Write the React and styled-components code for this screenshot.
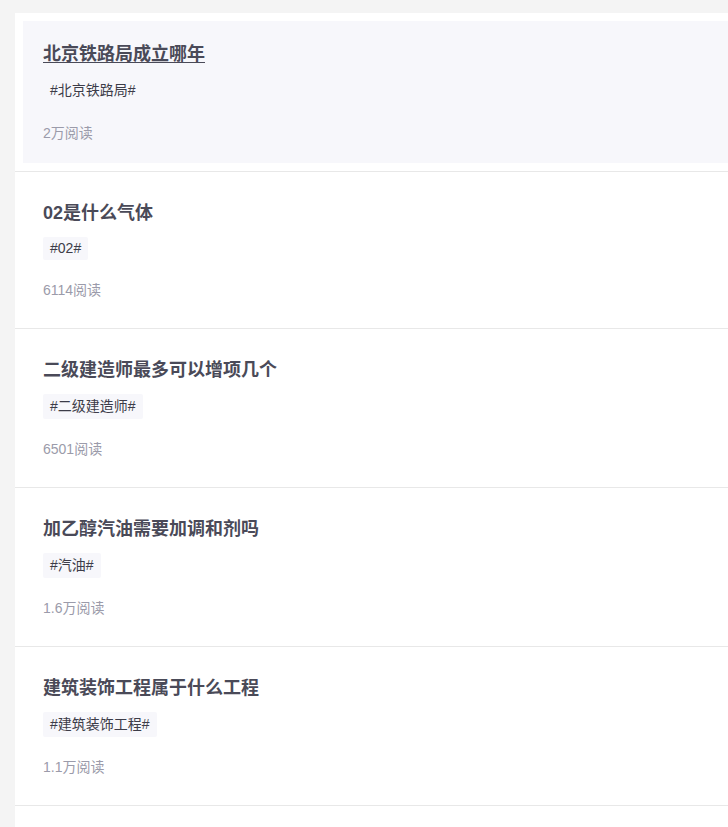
import React from "react";
import styled, { createGlobalStyle } from "styled-components";

const GlobalStyle = createGlobalStyle`
  html, body {
    margin: 0;
    padding: 0;
    background: #f4f4f4;
    overflow: hidden;
  }
  body {
    font-family: "Liberation Sans", "Noto Sans CJK SC", sans-serif;
  }
`

const Page = styled.div`
  padding: 13px 0 0 15px;
  height: 827px;
  box-sizing: border-box;
  overflow: hidden;
`

const List = styled.ul`
  list-style: none;
  margin: 0;
  padding: 0;
  width: 760px;
  min-height: 814px;
  background: #fff;
`

const Row = styled.li`
  border-bottom: 1px solid #e8e8e8;
  padding: 8px;
`

const Card = styled.div`
  padding: 21px 20px 20px;
  background: ${props => props.active ? "#f7f7fb" : "transparent"};
  cursor: pointer;
`

const Title = styled.h3`
  margin: 0;
  font-size: 18px;
  line-height: 24px;
  font-weight: 700;
  color: #4a4a58;
  text-decoration: ${props => props.active ? "underline" : "none"};
  text-underline-offset: 2px;
`

// tags holding CJK text render 2px taller in the reference
const Tag = styled.span`
  display: inline-block;
  margin-top: 12px;
  padding: 0 7px;
  height: ${props => props.cjk ? "25px" : "23px"};
  line-height: ${props => props.cjk ? "25px" : "23px"};
  font-size: 14px;
  color: #3c3c48;
  background: #f7f7fb;
  border-radius: 2px;
`

const Reads = styled.div`
  margin-top: 20px;
  font-size: 14px;
  line-height: 20px;
  color: #9b9baa;
`

const items = [
  { title: "北京铁路局成立哪年", tag: "北京铁路局", reads: "2万阅读" },
  { title: "02是什么气体", tag: "02", reads: "6114阅读" },
  { title: "二级建造师最多可以增项几个", tag: "二级建造师", reads: "6501阅读" },
  { title: "加乙醇汽油需要加调和剂吗", tag: "汽油", reads: "1.6万阅读" },
  { title: "建筑装饰工程属于什么工程", tag: "建筑装饰工程", reads: "1.1万阅读" },
]

const hasCjk = s => /[\u4e00-\u9fff]/.test(s)

const App = () => {
  return (
    <Page>
      <GlobalStyle />
      <List>
        {items.map((item, id) => {
          const active = id === 0
          return (
            <Row key={id}>
              <Card active={active}>
                <Title active={active}>{item.title}</Title>
                <Tag cjk={hasCjk(item.tag)}>#{item.tag}#</Tag>
                <Reads>{item.reads}</Reads>
              </Card>
            </Row>
          )
        })}
      </List>
    </Page>
  )
}

export default App;
